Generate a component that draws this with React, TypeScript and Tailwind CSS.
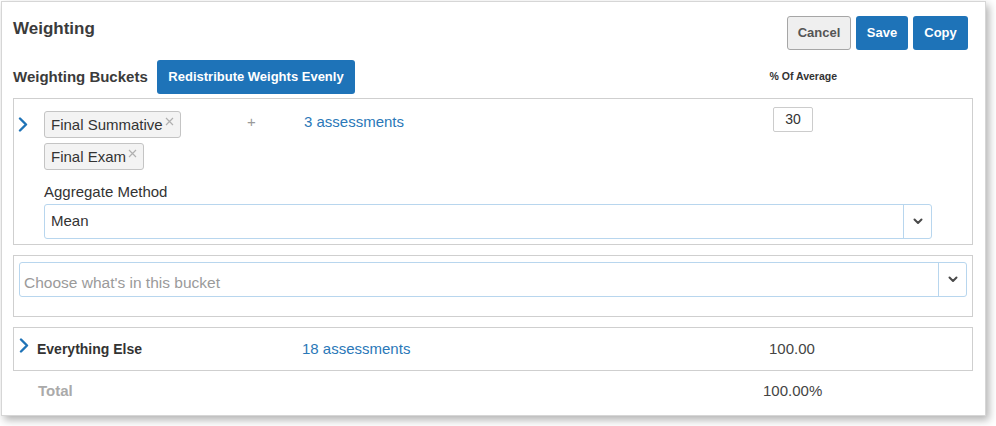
import React from 'react'

function ChevronRight() {
  return (
    <svg width="10" height="15" viewBox="0 0 10 15" fill="none">
      <path d="M2 1.5 L8 7.5 L2 13.5" stroke="#1f73b7" strokeWidth={2.4} strokeLinecap="round" strokeLinejoin="round" />
    </svg>
  )
}

function ChevronDown() {
  return (
    <svg width="10" height="7" viewBox="0 0 10 7" fill="none">
      <path d="M1.5 1.5 L5 5 L8.5 1.5" stroke="#4a4a4a" strokeWidth={2} strokeLinecap="round" strokeLinejoin="round" />
    </svg>
  )
}

function Tag({ label }: { label: string }) {
  return (
    <span className="flex items-start gap-[2px] rounded-[3px] border border-[#c4c4c4] bg-[#f3f3f3] py-[3px] pl-[6px] pr-[6px] text-[15px] leading-[19px] text-[#333]">
      {label}
      <svg width="9" height="9" viewBox="0 0 9 9" className="mt-[2px]" fill="none">
        <path d="M1 1 L8 8 M8 1 L1 8" stroke="#b0b0b0" strokeWidth={1.2} />
      </svg>
    </span>
  )
}

function Select({ value, placeholder, className }: { value?: string; placeholder?: string; className: string }) {
  return (
    <div className={`flex rounded-[3px] border border-[#b8d6ee] bg-white ${className}`}>
      <div
        className={`flex flex-1 items-center ${
          value ? 'pl-[6px] text-[15px] text-[#333]' : 'pl-[4px] pt-[6px] text-[15.5px] text-[#9a9a9a]'
        }`}
      >
        {value ?? placeholder}
      </div>
      <div className="flex w-[28px] items-center justify-center border-l border-[#b8d6ee]">
        <ChevronDown />
      </div>
    </div>
  )
}

export default function App() {
  return (
    <div className="h-[426px] w-[996px] bg-white font-['Liberation_Sans',Arial,sans-serif]">
      <div className="ml-px mt-px h-[415px] w-[985px] border border-[#d6d6d6] bg-white pl-[11px] pr-[12px] pt-[13px] shadow-[3px_4px_8px_rgba(0,0,0,0.3)]">
        {/* header */}
        <div className="flex items-start justify-between">
          <h1 className="mt-[2px] text-[17px] font-bold leading-6 text-[#3b3b3b]">Weighting</h1>
          <div className="mr-[5px] mt-px flex gap-[5px]">
            <button type="button" className="h-[34px] w-[64px] rounded-[3px] border border-[#a6a6a6] bg-[#efefef] text-[13px] font-bold text-[#555]">
              Cancel
            </button>
            <button type="button" className="h-[34px] w-[52px] rounded-[3px] bg-[#1e73b8] text-[13px] font-bold text-white">
              Save
            </button>
            <button type="button" className="h-[34px] w-[55px] rounded-[3px] bg-[#1e73b8] text-[13px] font-bold text-white">
              Copy
            </button>
          </div>
        </div>

        {/* buckets heading */}
        <div className="mt-[10px] flex items-center">
          <span className="w-[144px] text-[15px] font-bold text-[#3b3b3b]">Weighting Buckets</span>
          <button type="button" className="h-[34px] w-[198px] rounded-[3px] bg-[#1e73b8] text-[13px] font-bold text-white">
            Redistribute Weights Evenly
          </button>
          <span className="ml-auto mr-[136px] text-[10.5px] font-bold text-[#333]">% Of Average</span>
        </div>

        {/* bucket 1 */}
        <div className="mt-[4px] flex border border-[#cfcfcf] pb-[5px] pt-[12px]">
          <div className="w-[30px] pl-[4px] pt-[6px]">
            <ChevronRight />
          </div>
          <div className="flex flex-col">
            <div className="flex items-start">
              <div className="flex w-[203px] flex-wrap gap-[5px]">
                <Tag label="Final Summative" />
                <Tag label="Final Exam" />
              </div>
              <span className="mt-px w-[57px] text-[15px] leading-5 text-[#9a9a9a]">+</span>
              <span className="mt-px w-[469px] text-[15px] leading-5 text-[#2a78b8]">3 assessments</span>
              <div className="-mt-[4px] flex h-[25px] w-[40px] items-center justify-center rounded-[2px] border border-[#cccccc] text-[14px] text-[#333]">
                30
              </div>
            </div>
            <span className="mt-[12px] text-[15px] leading-5 text-[#333]">Aggregate Method</span>
            <Select value="Mean" className="mt-[2px] h-[35px] w-[888px]" />
          </div>
        </div>

        {/* bucket 2 */}
        <div className="mt-[10px] border border-[#cfcfcf] pb-[19px] pl-[5px] pr-[5px] pt-[6px]">
          <Select placeholder="Choose what's in this bucket" className="h-[35px]" />
        </div>

        {/* everything else */}
        <div className="mt-[10px] flex h-[44px] items-center border border-[#cfcfcf] pl-[5px]">
          <div className="-mt-[8px] w-[18px]">
            <ChevronRight />
          </div>
          <span className="w-[265px] text-[14px] font-bold text-[#333]">Everything Else</span>
          <span className="w-[467px] text-[15px] text-[#2a78b8]">18 assessments</span>
          <span className="text-[15px] text-[#444]">100.00</span>
        </div>

        {/* total */}
        <div className="mt-[10px] flex items-center pl-[25px] leading-5">
          <span className="w-[725px] text-[15px] font-bold text-[#aaaaaa]">Total</span>
          <span className="text-[15px] text-[#444]">100.00%</span>
        </div>
      </div>
    </div>
  )
}
